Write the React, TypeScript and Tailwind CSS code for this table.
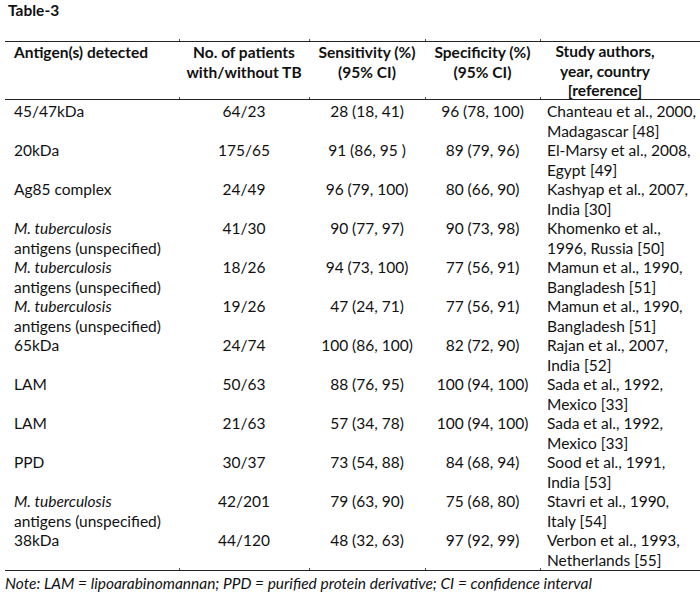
import React from "react";

type Row = {
  a: React.ReactNode;
  n: string;
  sens: string;
  spec: string;
  s1: string;
  s2: string;
};

const MT = (
  <>
    <i>M. tuberculosis</i>
    <br />
    antigens (unspecified)
  </>
);

const rows: Row[] = [
  { a: "45/47kDa", n: "64/23", sens: "28 (18, 41)", spec: "96 (78, 100)", s1: "Chanteau et al., 2000,", s2: "Madagascar [48]" },
  { a: "20kDa", n: "175/65", sens: "91 (86, 95 )", spec: "89 (79, 96)", s1: "El-Marsy et al., 2008,", s2: "Egypt [49]" },
  { a: "Ag85 complex", n: "24/49", sens: "96 (79, 100)", spec: "80 (66, 90)", s1: "Kashyap et al., 2007,", s2: "India [30]" },
  { a: MT, n: "41/30", sens: "90 (77, 97)", spec: "90 (73, 98)", s1: "Khomenko et al.,", s2: "1996, Russia [50]" },
  { a: MT, n: "18/26", sens: "94 (73, 100)", spec: "77 (56, 91)", s1: "Mamun et al., 1990,", s2: "Bangladesh [51]" },
  { a: MT, n: "19/26", sens: "47 (24, 71)", spec: "77 (56, 91)", s1: "Mamun et al., 1990,", s2: "Bangladesh [51]" },
  { a: "65kDa", n: "24/74", sens: "100 (86, 100)", spec: "82 (72, 90)", s1: "Rajan et al., 2007,", s2: "India [52]" },
  { a: "LAM", n: "50/63", sens: "88 (76, 95)", spec: "100 (94, 100)", s1: "Sada et al., 1992,", s2: "Mexico [33]" },
  { a: "LAM", n: "21/63", sens: "57 (34, 78)", spec: "100 (94, 100)", s1: "Sada et al., 1992,", s2: "Mexico [33]" },
  { a: "PPD", n: "30/37", sens: "73 (54, 88)", spec: "84 (68, 94)", s1: "Sood et al., 1991,", s2: "India [53]" },
  { a: MT, n: "42/201", sens: "79 (63, 90)", spec: "75 (68, 80)", s1: "Stavri et al., 1990,", s2: "Italy [54]" },
  { a: "38kDa", n: "44/120", sens: "48 (32, 63)", spec: "97 (92, 99)", s1: "Verbon et al., 1993,", s2: "Netherlands [55]" },
];

const GRID = "grid grid-cols-[174px_130px_116px_115px_160px]";

function Rule() {
  return (
    <div className={GRID + " h-px"}>
      <div className="bg-[#222]" />
      <div className="bg-[#222] relative">
        <span className="absolute left-0 -top-[2px] w-px h-[2px] bg-[#555]" />
      </div>
      <div className="bg-[#222] relative">
        <span className="absolute left-0 -top-[2px] w-px h-[2px] bg-[#555]" />
      </div>
      <div className="bg-[#222] relative">
        <span className="absolute left-0 -top-[2px] w-px h-[2px] bg-[#555]" />
      </div>
      <div className="bg-[#222] relative">
        <span className="absolute left-0 -top-[2px] w-px h-[2px] bg-[#555]" />
      </div>
    </div>
  );
}

export default function App() {
  return (
    <div
      className="w-[700px] h-[595px] overflow-hidden bg-white text-[#111] text-[15.5px] leading-[19.5px]"
      style={{ fontFamily: "Lato, 'Open Sans', sans-serif" }}
    >
      <div className="h-[41px] pl-[8px] pt-[1px] font-bold">Table-3</div>
      <div className="pl-[5px] w-[700px]">
        <Rule />
        <div className={GRID + " h-[57px] font-bold"}>
          <div className="pl-[9px] pt-[1px]">Antigen(s) detected</div>
          <div className="text-center pt-[1px]">
            No. of patients
            <br />
            with/without TB
          </div>
          <div className="text-center pt-[1px]">
            Sensitivity (%)
            <br />
            (95% CI)
          </div>
          <div className="text-center pt-[1px]">
            Specificity (%)
            <br />
            (95% CI)
          </div>
          <div className="text-center pl-[7px] pr-[37px] pt-[0px]">
            Study authors,
            <br />
            year, country
            <br />
            [reference]
          </div>
        </div>
        <Rule />
        <div className="pt-[2px]">
          {rows.map((r, i) => (
            <div key={i} className={GRID + " h-[39px]"}>
              <div className="pl-[9px] whitespace-nowrap">{r.a}</div>
              <div className="text-center">{r.n}</div>
              <div className="text-center">{r.sens}</div>
              <div className="text-center">{r.spec}</div>
              <div className="pl-[7px] whitespace-nowrap">
                {r.s1}
                <br />
                {r.s2}
              </div>
            </div>
          ))}
        </div>
        <Rule />
      </div>
      <div className="pl-[5px] pt-[3px] italic whitespace-nowrap">
        Note: LAM = lipoarabinomannan; PPD = purified protein derivative; CI = confidence interval
      </div>
    </div>
  );
}
